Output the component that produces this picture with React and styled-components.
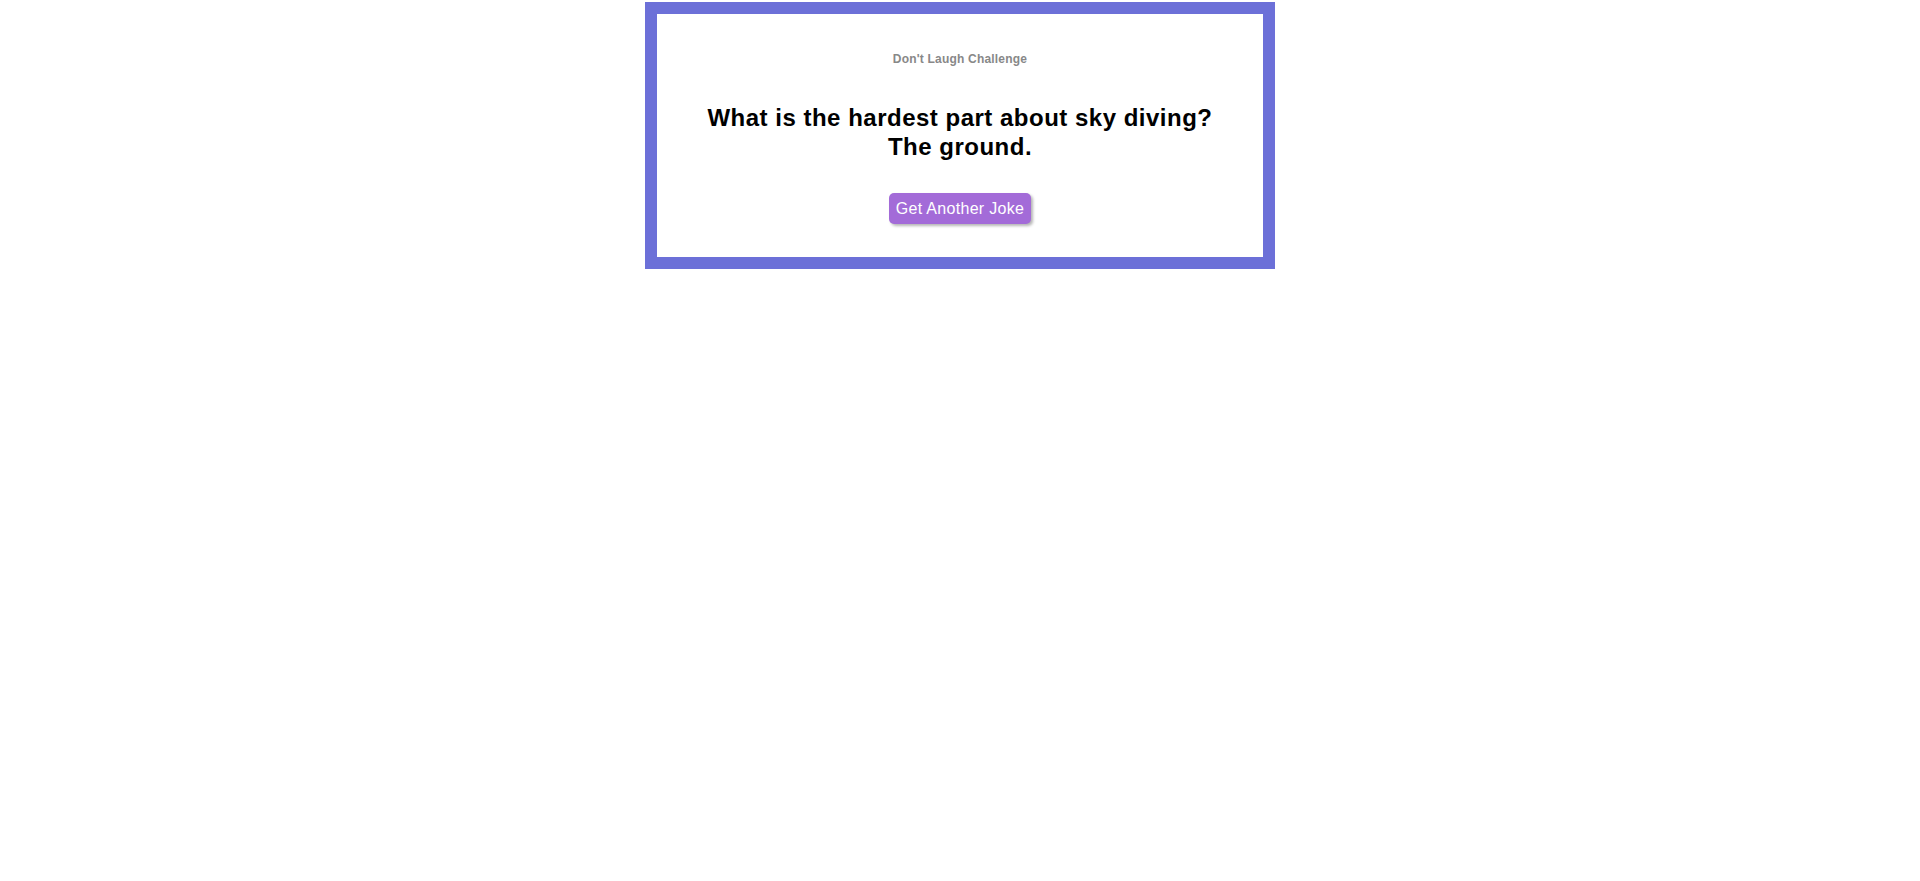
import React from "react";
import styled, { createGlobalStyle } from "styled-components";

const GlobalStyle = createGlobalStyle`
  html, body {
    margin: 0;
    padding: 0;
    background: #ffffff;
    font-family: "Liberation Sans", Arial, sans-serif;
  }
`;

const Page = styled.div`
  display: flex;
  justify-content: center;
  padding-top: 2px;
`;

const Card = styled.div`
  width: 630px;
  box-sizing: border-box;
  border: 12px solid #6c70d8;
  background: #fff;
  padding: 38px 20px 33px;
  display: flex;
  flex-direction: column;
  align-items: center;
  text-align: center;
`;

const Title = styled.h4`
  margin: 0;
  font-size: 12px;
  line-height: 14px;
  font-weight: bold;
  letter-spacing: 0.2px;
  color: #888888;
`;

const Joke = styled.h2`
  margin: 37px 0 32px;
  font-size: 24px;
  line-height: 29px;
  font-weight: bold;
  letter-spacing: 0.5px;
  color: #000;
`;

const Button = styled.button`
  font-family: "Liberation Sans", Arial, sans-serif;
  font-size: 16px;
  line-height: 19px;
  letter-spacing: 0.3px;
  color: #fff;
  background: #a36bd8;
  border: none;
  border-radius: 5px;
  padding: 6px 7px;
  box-shadow: 2px 2px 3px #b5b5b5;
  cursor: pointer;
`;

export default function App() {
  return (
    <>
      <GlobalStyle />
      <Page>
        <Card>
          <Title>Don't Laugh Challenge</Title>
          <Joke>
            What is the hardest part about sky diving?
            <br />
            The ground.
          </Joke>
          <Button>Get Another Joke</Button>
        </Card>
      </Page>
    </>
  );
}
